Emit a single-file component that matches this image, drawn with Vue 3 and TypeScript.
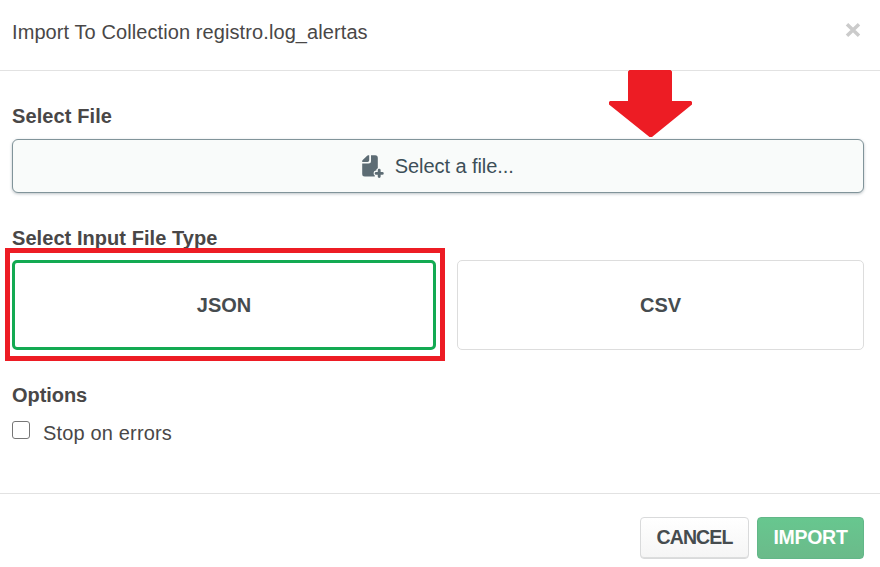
<script setup lang="ts">
import { ref } from 'vue'

const fileTypes = ['JSON', 'CSV'] as const
const selected = ref<(typeof fileTypes)[number]>('JSON')
const stopOnErrors = ref(false)
</script>

<template>
  <div class="modal">
    <header class="header">
      <h1 class="title">Import To Collection registro.log_alertas</h1>
      <button class="close" aria-label="Close">
        <svg width="16" height="16" viewBox="0 0 16 16">
          <path d="M2 2.2 14 13.8M14 2.2 2 13.8" stroke="#cbcbcb" stroke-width="3.5" />
        </svg>
      </button>
    </header>

    <main class="body">
      <h2 class="label label-file">Select File</h2>
      <button class="file">
        <svg class="file-icon" width="22" height="24" viewBox="0 0 22 24">
          <path d="M.2 6.2Q.2 5.6.7 5L4.9.9Q5.5.3 6.2.3H7.2V5.2Q7.2 6.9 5.5 6.9H.2Z" fill="#5d6c74" />
          <path
            d="M9 .3H13.2Q15.8.3 15.8 2.8V13.2Q14.3 13.6 14.3 15V15.6H13.8Q11.6 15.8 11.6 18Q11.6 20.2 12.8 20.6V21.5H2.8Q.2 21.5.2 19V8.6H6.4Q9 8.6 9 6.1Z"
            fill="#5d6c74"
          />
          <path
            d="M17.2 15.3V21.5M14.1 18.4H20.3"
            stroke="#5d6c74"
            stroke-width="2.9"
            stroke-linecap="round"
          />
        </svg>
        <span class="file-text">Select a file...</span>
      </button>

      <h2 class="label label-type">Select Input File Type</h2>
      <div class="types">
        <button
          v-for="type in fileTypes"
          :key="type"
          class="type"
          :class="[type.toLowerCase(), { active: selected === type }]"
          @click="selected = type"
        >
          <span>{{ type }}</span>
        </button>
      </div>

      <h2 class="label label-options">Options</h2>
      <label class="option">
        <input v-model="stopOnErrors" class="check" type="checkbox" />
        <span class="option-text">Stop on errors</span>
      </label>
    </main>

    <footer class="footer">
      <button class="btn cancel"><span>CANCEL</span></button>
      <button class="btn import"><span>IMPORT</span></button>
    </footer>

    <svg class="arrow" width="83" height="68" viewBox="0 0 83 68">
      <path d="M20.5 0H61.5L63 1.5V31H82L83 32V34.5L43 67H40.5L0 34.5V32L1 31H19V1.5Z" fill="#ed1c24" />
    </svg>
    <div class="frame"></div>
  </div>
</template>

<style>
body {
  margin: 0;
  background: #fff;
}
</style>

<style scoped>
* {
  box-sizing: border-box;
}
.modal {
  position: relative;
  display: flex;
  flex-direction: column;
  width: 880px;
  height: 567px;
  overflow: hidden;
  background: #fff;
  color: #494747;
  font-family: 'Liberation Sans', Arial, sans-serif;
  font-size: 20px;
  line-height: 24px;
}
button {
  font: inherit;
  color: inherit;
  padding: 0;
  margin: 0;
}
h1,
h2 {
  margin: 0;
  font-size: 20px;
  white-space: nowrap;
}
.header {
  display: flex;
  justify-content: space-between;
  height: 71px;
  padding: 20px 19px 0 12px;
  border-bottom: 1px solid #e2e2e2;
}
.title {
  font-weight: 400;
  letter-spacing: 0.09px;
}
.close {
  height: 16px;
  margin-top: 2px;
  border: 0;
  background: none;
  line-height: 0;
}
.body {
  height: 422px;
  padding: 33px 16px 0 12px;
}
.label {
  font-weight: 700;
  height: 24px;
}
.label-file {
  letter-spacing: 0.1px;
}
.label-type {
  letter-spacing: 0.06px;
}
.label-options {
  letter-spacing: -0.05px;
}
.file {
  display: flex;
  align-items: center;
  justify-content: center;
  width: 100%;
  height: 54px;
  margin: 11px 0 33px;
  border: 1px solid #81949a;
  border-radius: 6px;
  background: #f9fbfa;
  box-shadow: 0 1px 3px rgba(60, 80, 90, 0.35);
  color: #3d4f58;
}
.file-icon {
  margin: 2px 10.5px 0 0;
}
.file-text {
  letter-spacing: -0.06px;
}
.types {
  display: grid;
  grid-template-columns: 424px 407px;
  column-gap: 21px;
  height: 90px;
  margin: 10px 0 33px;
}
.type {
  border: 1px solid #dddddd;
  border-radius: 5px;
  background: #fff;
  color: #464c4f;
  font-weight: 700;
}
.type.active {
  border: 3px solid #13aa52;
}
.option {
  display: flex;
  align-items: flex-start;
  margin-top: 14px;
}
.option-text {
  letter-spacing: 0.16px;
}
.check {
  appearance: none;
  width: 18px;
  height: 18px;
  margin: 0 13px 0 0;
  border: 1px solid #767676;
  border-radius: 3px;
  background: #fff;
}
.footer {
  display: flex;
  justify-content: flex-end;
  gap: 8px;
  height: 74px;
  padding: 23px 16px 0 0;
  border-top: 1px solid #e2e2e2;
}
.btn {
  height: 42px;
  padding-bottom: 2px;
  border-radius: 4px;
  font-size: 19.5px;
  font-weight: 700;
}
.cancel {
  width: 109px;
  border: 1px solid #d9dadb;
  background: linear-gradient(#fff, #f5f5f5);
  box-shadow: inset 0 -1px 0 #dcdddd;
  color: #464c4f;
  letter-spacing: -0.9px;
}
.import {
  width: 107px;
  border: 1px solid #62b788;
  background: linear-gradient(#67c78f, #6bba8a);
  color: #fff;
  letter-spacing: -0.3px;
}
.arrow {
  position: absolute;
  left: 609px;
  top: 70px;
}
.frame {
  position: absolute;
  left: 5px;
  top: 248px;
  width: 440px;
  height: 113px;
  border: 5px solid #ed1c24;
  pointer-events: none;
}
</style>
